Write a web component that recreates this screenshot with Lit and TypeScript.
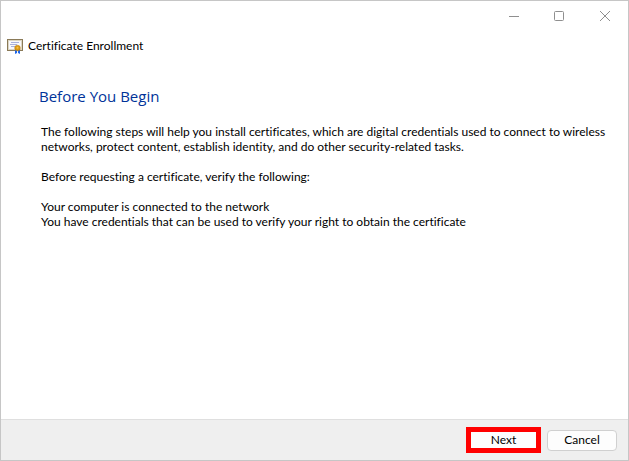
import { LitElement, html, css } from "lit";
import { customElement } from "lit/decorators.js";

@customElement("app-root")
export class AppRoot extends LitElement {
  static styles = css`
    :host {
      display: block;
      font: 12px/15px Lato, "Open Sans", sans-serif;
      font-variant-ligatures: none;
      color: #000;
    }
    .window {
      box-sizing: border-box;
      min-height: 100vh;
      display: flex;
      flex-direction: column;
      background: #fff;
      border: 1px solid #c6c6c6;
    }
    .caption {
      display: flex;
      justify-content: flex-end;
      height: 29px;
    }
    .caption button {
      width: 46px;
      padding: 0;
      border: 0;
      background: none;
      display: grid;
      place-items: center;
    }
    svg {
      display: block;
    }
    .title {
      display: flex;
      align-items: center;
      gap: 5px;
      padding: 8px 6px;
    }
    .title h1 {
      margin: 0;
      font-size: 12px;
      font-weight: 400;
      line-height: 16px;
    }
    main {
      flex: 1;
      padding: 24px 16px 24px 40px;
    }
    h2 {
      margin: 0 0 18px;
      margin-left: -2px;
      font-family: "Open Sans", sans-serif;
      font-size: 15px;
      font-weight: 400;
      line-height: 20px;
      color: #003399;
    }
    p {
      margin: 0 0 15px;
    }
    footer {
      display: flex;
      justify-content: flex-end;
      align-items: center;
      gap: 6px;
      padding: 7px 11px;
      background: #efefef;
      border-top: 1px solid #dfdfdf;
    }
    footer button {
      box-sizing: border-box;
      width: 70px;
      height: 21px;
      padding: 0;
      font: inherit;
      line-height: 16px;
      color: inherit;
      background: #fdfdfd;
      border: 1px solid #d0d0d0;
      border-radius: 4px;
    }
    footer .next {
      width: 75px;
      height: 26px;
      border: 5px solid #ff0000;
      border-radius: 0;
    }
  `;

  render() {
    return html`
      <div class="window">
        <div class="caption">
          <button aria-label="Minimize">
            <svg width="12" height="12" viewBox="0 0 12 12" fill="none" stroke="#8f8f8f">
              <path d="M2 6.5h10" />
            </svg>
          </button>
          <button aria-label="Maximize">
            <svg width="12" height="12" viewBox="0 0 12 12" fill="none" stroke="#8f8f8f">
              <rect x="1.5" y="1.5" width="9" height="9" rx="1" />
            </svg>
          </button>
          <button aria-label="Close">
            <svg width="12" height="12" viewBox="0 0 12 12" fill="none" stroke="#8f8f8f">
              <path d="M1 1l10 10M11 1L1 11" />
            </svg>
          </button>
        </div>
        <div class="title">
          <svg width="16" height="16" viewBox="0 0 16 16" aria-hidden="true">
            <rect x="0.5" y="1.5" width="15" height="11" fill="#f8f8fc" stroke="#8a7a58" />
            <rect x="1.5" y="2.5" width="13" height="9" fill="none" stroke="#dcd6c4" />
            <path d="M4 4.5h8M3 6.5h7M4 8.5h4" stroke="#a9b1dc" />
            <path d="M8 11v5l2-1v-4zM13 11v5l-2-1v-4z" fill="#1f66e8" />
            <circle cx="10.500" cy="10" r="2.800" fill="#dc9a14" stroke="#b87a0c" stroke-width=".5" />
            <circle cx="10.500" cy="9.800" r="1" fill="#f4c04a" />
          </svg>
          <h1>Certificate Enrollment</h1>
        </div>
        <main>
          <h2>Before You Begin</h2>
          <p>
            The following steps will help you install certificates, which are digital credentials
            used to connect to wireless networks, protect content, establish identity, and do other
            security-related tasks.
          </p>
          <p>Before requesting a certificate, verify the following:</p>
          <p>
            Your computer is connected to the network<br />
            You have credentials that can be used to verify your right to obtain the certificate
          </p>
        </main>
        <footer>
          <button class="next">Next</button>
          <button>Cancel</button>
        </footer>
      </div>
    `;
  }
}
